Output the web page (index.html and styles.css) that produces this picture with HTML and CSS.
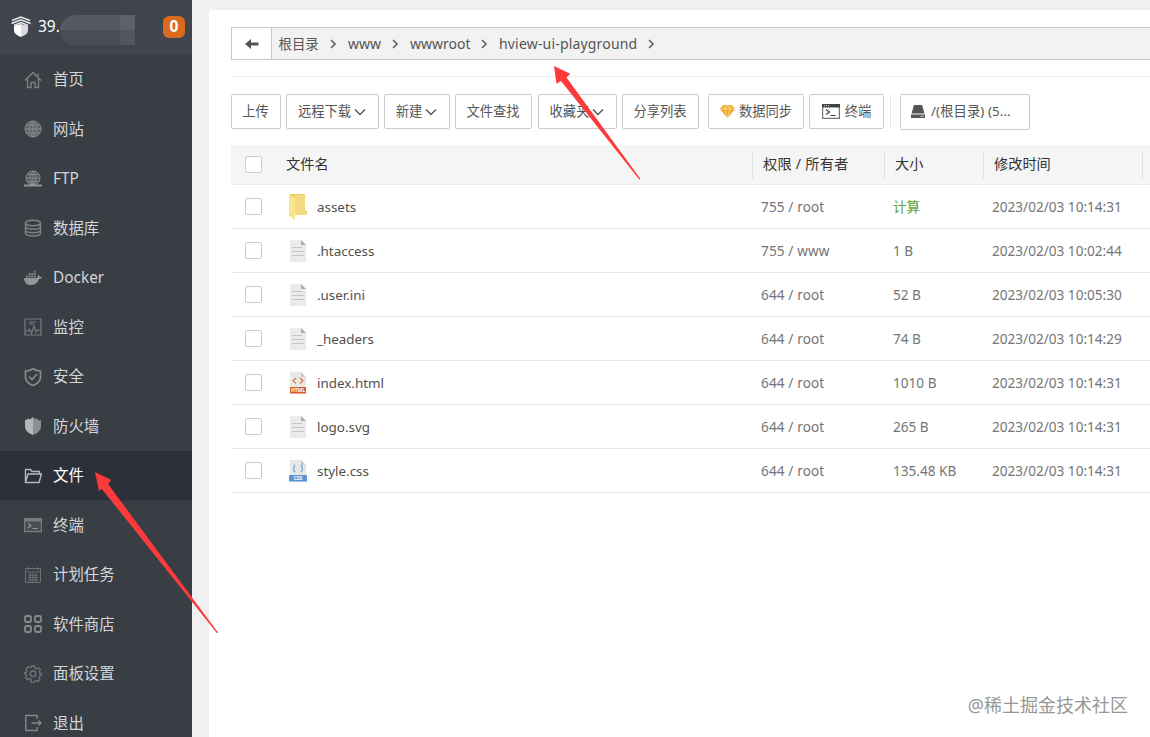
FILE: index.html
```html
<!DOCTYPE html>
<html lang="zh-CN">
<head>
<meta charset="utf-8">
<title>文件</title>
<link rel="stylesheet" href="styles.css">
</head>
<body>
<svg class="defs" width="0" height="0">
  <symbol id="chev" viewBox="0 0 12 8"><path d="M1 1.5l5 5 5-5" fill="none" stroke="#555" stroke-width="1.4"/></symbol>
  <symbol id="sep" viewBox="0 0 6 10"><path d="M1 1l4 4-4 4" fill="none" stroke="#666" stroke-width="1.7"/></symbol>
  <symbol id="doc" viewBox="0 0 18 22"><path d="M1 0h11l5 5v17H1z" fill="#ebebeb"/><path d="M12 0l5 5h-5z" fill="#aaa"/><path d="M3 7.5h10M3 11.5h12M3 15.5h12" stroke="#c4c4c4" stroke-width="1.1"/></symbol>
</svg>
<div class="app">
  <aside class="sidebar">
    <div class="brand">
      <svg class="logo" width="20" height="22" viewBox="0 0 20 22"><path d="M1 4.500L10 1l9 3.500M.5 7.500L10 3.800l9.500 3.700M3 9.500l7-3 7 3" fill="none" stroke="#e8eaec" stroke-width="1.500"/><path d="M3 10l7-2v13C5 19 3 17 3 14z" fill="#fff"/><path d="M17 10l-7-2v13c5-2 7-4 7-7z" fill="#d9dbdd"/></svg>
      <span class="ip">39.</span><span class="mask"></span><span class="badge">0</span>
    </div>
    <nav class="menu">
      <a class="item zh"><svg class="ic" viewBox="0 0 18 18"><path d="M1 9.500L9 1.500l8 8M3.500 8v8.500h3.500v-5h4v5h3.500V8M14 5.500V2.500" fill="none" stroke="currentColor" stroke-width="1.400"/></svg>首页</a>
      <a class="item zh"><svg class="ic" viewBox="0 0 18 18"><circle cx="9" cy="9" r="8" fill="#5e6368"/><path d="M1 9h16M2.500 5h13M2.500 13h13M9 1v16M9 1C4 5 4 13 9 17M9 1c5 4 5 12 0 16M9 1a8 8 0 1 0 .1 0" fill="none" stroke="#858a8e" stroke-width="1"/></svg>网站</a>
      <a class="item"><svg class="ic" viewBox="0 0 18 18"><circle cx="9" cy="8" r="7" fill="#54595e"/><path d="M2 8h14M3.500 4.500h11M3.500 11.500h11M9 1v14M9 1C5 5 5 11 9 15M9 1c4 4 4 10 0 14M9 1a7 7 0 1 0 .1 0" fill="none" stroke="#858a8e"/><path d="M0 15.500h18M6 14.500h6" stroke="#92969a" stroke-width="2"/></svg>FTP</a>
      <a class="item zh"><svg class="ic" viewBox="0 0 18 18"><g fill="none" stroke="currentColor" stroke-width="1.500"><ellipse cx="9" cy="4" rx="7.500" ry="2.800"/><path d="M1.500 4v10c0 4 15 4 15 0V4M1.500 7.500c0 3.600 15 3.600 15 0M1.500 11c0 3.600 15 3.600 15 0"/></g></svg>数据库</a>
      <a class="item"><svg class="ic" viewBox="0 0 18 18"><path d="M0 9h13c1-1 .5-2 1-3 1 .4 1.500 1 1.500 1.800 1-.2 1.800 0 2.500.4-.5 1.200-1.600 1.700-3 1.800C13.500 14 11 16 7 16 2.500 16 .3 13.500 0 9z" fill="#92969a"/><path d="M2 6.500h2v2H2zM4.600 6.500h2v2h-2zM7.200 6.500h2v2h-2zM9.800 6.500h2v2h-2zM4.600 4h2v2h-2zM7.200 4h2v2h-2zM9.800 4h2v2h-2zM9.800 1.500h2v2h-2z" fill="#7b8084"/></svg>Docker</a>
      <a class="item zh"><svg class="ic" viewBox="0 0 18 18"><path d="M1 1h16v16H1zM1 13h3l1.500-2 2 4L10 8l2 6 1.500-2H17M5 4h7M5 6h5" fill="none" stroke="#787d82" stroke-width="1.200"/></svg>监控</a>
      <a class="item zh"><svg class="ic" viewBox="0 0 18 18"><path d="M9 .8c2.500 1.700 5 2.200 7.500 2.200v6c0 4-3 6.800-7.500 8.500C4.500 15.800 1.500 13 1.500 9V3C4 3 6.500 2.500 9 .8zM5 8.500l3 3 5-5.500" fill="none" stroke="#868b8f" stroke-width="1.700"/></svg>安全</a>
      <a class="item zh"><svg class="ic" viewBox="0 0 18 18"><path d="M9 0v18c-5-2-8-4.500-8-9V3c2 0 2.500-1 3.500-1.500L6 2.500z" fill="#b4b6b7"/><path d="M9 0l2 2 1.500-1L14 3l3 .5V9c0 4.500-3 7-8 9z" fill="#8d9092"/></svg>防火墙</a>
      <a class="item zh active"><svg class="ic" viewBox="0 0 18 18"><path d="M1.500 15.500V2.500h5l1.500 2h7.500v2.500M1.500 15.500l2.500-8.500h13.500l-2.500 8.500z" fill="none" stroke="#b7b9bd" stroke-width="1.400" stroke-linejoin="round"/></svg>文件</a>
      <a class="item zh"><svg class="ic" viewBox="0 0 18 18"><path d="M.6 2.600h16.800v13H.6z" fill="#4b4f55" stroke="#777c80" stroke-width="1.200"/><path d="M0 2h18v3.500H0z" fill="#777c80"/><path d="M4 7.500l3 2.200-3 2.300M8.500 12.500h5" fill="none" stroke="#92969a" stroke-width="1.200"/></svg>终端</a>
      <a class="item zh"><svg class="ic" viewBox="0 0 18 18"><path d="M1.500 2.500h15v14h-15zM1.500 6h15M4.500 1v3M13.500 1v3M4 9h10M4 11.500h10M4 14h10M6 7.500v8M9 7.500v8M12 7.500v8" fill="none" stroke="#6c7176" stroke-width="1"/></svg>计划任务</a>
      <a class="item zh"><svg class="ic" viewBox="0 0 18 18"><g fill="none" stroke="#858a8e" stroke-width="1.800"><rect x="1" y="1" width="6" height="6" rx="1.500"/><rect x="11" y="1" width="6" height="6" rx="1.500"/><rect x="1" y="11" width="6" height="6" rx="1.500"/><rect x="11" y="11" width="6" height="6" rx="1.500"/></g></svg>软件商店</a>
      <a class="item zh"><svg class="ic" viewBox="0 0 18 18"><path d="M7.500 1h3l.5 2.200 1.500.6 2-1.100 2 2-1.200 2 .6 1.400 1.600.4v2l-2 .6-.6 1.500 1.100 2-2 2-2-1.200-1.500.6-.5 2h-3L7 14l-1.500-.6-2 1.200-2-2 1.200-2L2 9.100l-1.500-.4V7.500L2.500 7 3 5.500l-1.200-2 2-2 2 1.200L7 2.500z" fill="none" stroke="#70757a" stroke-width="1.300"/><circle cx="9" cy="8.800" r="2.800" fill="none" stroke="#70757a" stroke-width="1.300"/></svg>面板设置</a>
      <a class="item zh"><svg class="ic" viewBox="0 0 18 18"><path d="M13 5V1.500H1.800v15H13V13M7.500 9h9.500M14.500 6.500L17 9l-2.500 2.500" fill="none" stroke="#858a8e" stroke-width="1.400"/></svg>退出</a>
    </nav>
  </aside>
  <main class="panel">
    <div class="path">
      <span class="back"><svg width="14" height="12" viewBox="0 0 14 12"><path d="M0 6l6-5v3.500h7.500v3H6V11z" fill="#555"/></svg></span>
      <span class="crumb c1">根目录</span><svg class="sep"><use href="#sep"/></svg>
      <span class="crumb c2">www</span><svg class="sep"><use href="#sep"/></svg>
      <span class="crumb c3">wwwroot</span><svg class="sep"><use href="#sep"/></svg>
      <span class="crumb c4">hview-ui-playground</span><svg class="sep"><use href="#sep"/></svg>
    </div>
    <div class="tools">
      <button class="btn b1">上传</button>
      <button class="btn b2">远程下载<svg class="chev"><use href="#chev"/></svg></button>
      <button class="btn b3">新建<svg class="chev"><use href="#chev"/></svg></button>
      <button class="btn b4">文件查找</button>
      <button class="btn b5">收藏夹<svg class="chev"><use href="#chev"/></svg></button>
      <button class="btn b6">分享列表</button>
      <button class="btn b7"><svg width="15" height="13" viewBox="0 0 15 13"><path d="M3 0h9l3 4-7.500 9L0 4z" fill="#f0a52a"/><path d="M3 0l2 4 2.500-4L10 4l2-4M0 4h15M5 4l2.500 9L10 4" fill="none" stroke="#fbdc91" stroke-width=".9"/></svg>数据同步</button>
      <button class="btn b8"><svg width="18" height="15" viewBox="0 0 18 15"><path d="M.6.600h16.800v13.800H.6z" fill="#fff" stroke="#777" stroke-width="1.200"/><path d="M0 0h18v3.500H0z" fill="#444"/><path d="M2 1.700h1M4 1.700h1M6 1.700h1" stroke="#ddd"/><path d="M4 5.500l3.500 2.500L4 10.500M8.500 11.500h5" fill="none" stroke="#444" stroke-width="1.200"/></svg>终端</button>
      <i class="divider"></i>
      <button class="btn disk"><svg width="14" height="13" viewBox="0 0 14 13"><path d="M3 0h8l2.500 8.500H.5zM0 9.500h14V13H0z" fill="#555"/><path d="M9.500 11.300h3" stroke="#ddd"/></svg>/(根目录) (5...</button>
    </div>
    <div class="table">
      <div class="row head"><i class="check"></i><span class="fname">文件名</span><span class="col wide">权限 / 所有者</span><span class="col">大小</span><span class="col">修改时间</span><span class="col"></span></div>
      <div class="row"><i class="check"></i><span class="name"><svg class="folder" viewBox="0 0 19 26"><path d="M2 0h15v16l2 1v4H2z" fill="#efcd62"/><path d="M7 1h10v16l2 1v3H7z" fill="#f3da80"/><path d="M1 0l6 4v22l-6-4z" fill="#f9e48f"/></svg>assets</span><span class="perm">755 / root</span><span class="calc">计算</span><span>2023/02/03 10:14:31</span></div>
      <div class="row"><i class="check"></i><span class="name"><svg class="file"><use href="#doc"/></svg>.htaccess</span><span class="perm">755 / www</span><span>1 B</span><span>2023/02/03 10:02:44</span></div>
      <div class="row"><i class="check"></i><span class="name"><svg class="file"><use href="#doc"/></svg>.user.ini</span><span class="perm">644 / root</span><span>52 B</span><span>2023/02/03 10:05:30</span></div>
      <div class="row"><i class="check"></i><span class="name"><svg class="file"><use href="#doc"/></svg>_headers</span><span class="perm">644 / root</span><span>74 B</span><span>2023/02/03 10:14:29</span></div>
      <div class="row"><i class="check"></i><span class="name"><svg class="file" viewBox="0 0 18 22"><path d="M1 0h11l5 5v17H1z" fill="#e9e9e4"/><path d="M12 0l5 5h-5z" fill="#ccc"/><path d="M7 6L4 8.800 7 11.500M11 6l3 2.800-3 2.700" fill="none" stroke="#df7650" stroke-width="1.200"/><path d="M1 15h16v6.500H1z" fill="#d4602f"/><text x="9" y="20.400" class="tag">HTML</text></svg>index.html</span><span class="perm">644 / root</span><span>1010 B</span><span>2023/02/03 10:14:31</span></div>
      <div class="row"><i class="check"></i><span class="name"><svg class="file"><use href="#doc"/></svg>logo.svg</span><span class="perm">644 / root</span><span>265 B</span><span>2023/02/03 10:14:31</span></div>
      <div class="row"><i class="check"></i><span class="name"><svg class="file" viewBox="0 0 18 22"><path d="M1 0h11l5 5v17H1z" fill="#e6e8e6"/><path d="M12 0l5 5h-5z" fill="#ccc"/><path d="M6.500 5C4 5 6 8.500 4 8.500c2 0 0 3.500 2.500 3.500M11.500 5c2.500 0 .5 3.500 2.500 3.500-2 0 0 3.500-2.500 3.500" fill="none" stroke="#62a0dc" stroke-width="1.200"/><path d="M0 15h18v6.500H0z" fill="#5b93d3"/><text x="9" y="20.400" class="tag">CSS</text></svg>style.css</span><span class="perm">644 / root</span><span>135.48 KB</span><span>2023/02/03 10:14:31</span></div>
    </div>
  </main>
  <svg class="arrows" viewBox="0 0 1150 737"><path d="M554 66l16.300 7.800-3.800 3.700L640.500 179l-1 .8L561 81l-4.500 2.700zM95 472l16.300 8-3.300 4L218 632.500l-1 .8L101.700 488.700 99 491z" fill="#fb3b3b"/></svg>
  <div class="watermark">@稀土掘金技术社区</div>
</div>
</body>
</html>
```

FILE: styles.css
```css
* { box-sizing: border-box; }
body { margin: 0; background: #f0f0f0; font-family: "Noto Sans", "Noto Sans CJK SC", sans-serif; color: #555; }
.defs { display: block; position: absolute; }
.app { position: relative; display: flex; width: 1150px; height: 737px; overflow: hidden; }

.sidebar { width: 192px; flex: none; background: #393d44; overflow: hidden; }
.brand { display: flex; align-items: center; height: 55px; padding: 0 7px 2px 11px; background: #40444d; color: #fff; }
.logo { flex: none; margin-top: 1px; }
.ip { width: 22px; margin: -2px 0 0 7px; font-size: 15.500px; white-space: nowrap; }
.mask { width: 75px; height: 30px; margin-top: 6px; border-radius: 16px 0 0 14px; background: linear-gradient(90deg, transparent 60px, rgba(255, 255, 255, .05) 60px), linear-gradient(#565961 50%, #494d56 50%); }
.badge { width: 22px; height: 22px; margin-left: auto; border-radius: 6px; background: #d96a20; font-size: 15.500px; font-weight: 700; line-height: 21px; text-align: center; }
.item { display: flex; align-items: center; height: 49.5px; padding-left: 24px; gap: 11px; font-size: 15.4px; color: #d3d6d9; white-space: nowrap; }
.item.zh { padding-bottom: 2px; }
.item.zh .ic { margin-top: 2px; }
.item.active { background: #2d3038; color: #fff; border-bottom: 1px solid #34373e; padding-bottom: 1px; }
.ic { width: 18px; height: 18px; flex: none; color: #7d8286; }

.panel { flex: none; width: 960px; margin: 10px 0 0 17px; padding: 17px 0 0 22px; border-radius: 4px 0 0; background: #fff; }
.path { display: flex; align-items: center; height: 33px; border: 1px solid #c8c8c8; background: #f2f2f2; font-size: 14px; }
.back { display: flex; align-items: center; justify-content: center; width: 40px; height: 31px; border-right: 1px solid #c8c8c8; background: #fff; }
.crumb { flex: none; margin-left: 12px; white-space: nowrap; }
.c1 { width: 51.500px; margin-left: 6.500px; padding-bottom: 2px; font-size: 13.400px; }
.c2 { width: 43.500px; }
.c3 { width: 71px; margin-left: 12.500px; }
.c4 { width: 149px; letter-spacing: .18px; }
.sep { width: 6px; height: 10px; flex: none; }

.tools { display: flex; margin-top: 16px; padding-top: 17px; border-top: 1px solid #ececec; height: 69px; }
.btn { display: flex; align-items: center; justify-content: center; flex: none; height: 35px; margin: 0 5px 0 0; padding: 0 1px 2px 0; border: 1px solid #ccc; border-radius: 2px; background: #fff; font: 13.3px "Noto Sans", "Noto Sans CJK SC", sans-serif; color: #555; white-space: nowrap; }
.btn svg { margin-top: 2px; }
.chev { width: 12px; height: 8px; margin-left: 3px; }
.b1 { width: 50px; }
.b2 { width: 93px; }
.b3 { width: 66px; }
.b4 { width: 77px; margin-right: 6px; }
.b5 { width: 79px; }
.b6 { width: 77px; margin-right: 9px; }
.b7 { width: 96px; gap: 4px; padding-right: 0; }
.b8 { width: 75px; gap: 5px; padding-right: 0; }
.divider { width: 1px; height: 35px; margin: 0 9px 0 1px; background: #e6e6e6; }
.disk { width: 130px; height: 36px; justify-content: flex-start; padding: 0 0 3px 10px; gap: 6px; letter-spacing: .1px; }

.row { display: grid; grid-template-columns: 55px 475px 132px 99px 198px; align-items: center; height: 44px; border-bottom: 1px solid #e8e8e8; font-size: 13.600px; color: #757575; white-space: nowrap; }
.head { grid-template-columns: 55px 466px 132px 99px 159px 20px; height: 40px; background: #f5f5f5; font-size: 14.200px; color: #333; border-bottom-color: #ebebeb; }
.fname { padding-bottom: 4px; }
.col { height: 26px; padding-left: 10px; border-left: 1px solid #ddd; line-height: 23px; }
.wide { letter-spacing: .25px; }
.check { width: 17px; height: 17px; margin-left: 14px; border: 1px solid #ccc; border-radius: 2px; background: #fff; }
.name { display: flex; align-items: center; font-size: 13.400px; color: #505050; }
.perm { letter-spacing: .12px; }
.file { width: 18px; height: 22px; margin: 0 10px 0 3px; }
.folder { width: 19px; height: 26px; margin: 0 10px 0 2px; }
.tag { font: 700 5px "Noto Sans", sans-serif; fill: #fff; text-anchor: middle; }
.calc { padding-bottom: 2px; color: #5fa233; }

.arrows { position: absolute; left: 0; top: 0; width: 1150px; height: 737px; }
.watermark { position: absolute; right: 22px; bottom: 19px; font-size: 18px; line-height: 26px; color: #979797; white-space: nowrap; }
```
